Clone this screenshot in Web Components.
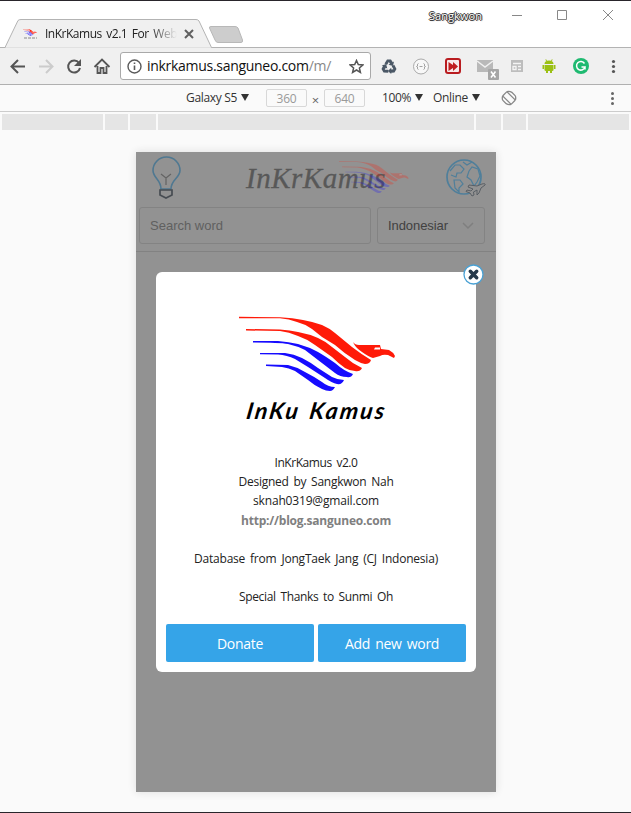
<!DOCTYPE html>
<html lang="en"><head><meta charset="utf-8"><title>InKrKamus</title>
<style>html,body{margin:0;height:813px;overflow:hidden;background:#fafafa}</style></head><body>
<browser-window></browser-window>
<script>
const define=(name,html,init)=>customElements.define(name,class extends HTMLElement{
 constructor(){super();this.attachShadow({mode:'open'}).innerHTML=html;}
 connectedCallback(){if(init)init.call(this);}
});

/* one line of text, tracked so that it fills the given width */
define('fit-text','<style>:host{display:inline-block;white-space:nowrap;flex:none}span{display:inline-block}</style><span><slot></slot></span>',function(){
 const s=this.shadowRoot.querySelector('span'),w=+this.getAttribute('width'),n=this.textContent.length;
 const natural=s.getBoundingClientRect().width;
 if(natural&&w)s.style.letterSpacing=((w-natural)/n)+'px';
});

/* the eagle with striped wings */
define('eagle-logo',`<style>:host{display:block}svg{display:block;width:100%;height:100%}</style>
<svg viewBox="0 0 157 75" preserveAspectRatio="none">
<g fill="#ff1a08">
<path d="M0 .7L41 1.3Q54 2 64 4Q75 6 83 9Q90 12 96 17L113 31Q122 38 132 44Q131 48 126 48Q121 47 116 44Q106 38 96 29L83 21L73 13Q66 8 58 6Q50 3 41 2.300L0 2.300Z"/>
<path d="M7 13L41 13.500Q51 14 59 16Q70 18 79 22Q86 25 93 31L106 41Q114 48 123 52Q121 56 116 55Q111 55 106 52Q100 48 93 41L76 29Q68 23 59 20Q50 16 41 15L7 14.500Z"/>
<path d="M114 26Q116 29 120 29H141L142 33L150 34Q154 36 156 40L155 42L149 39Q144 38 141 40L134 42Q130 41 123 36Q117 32 115 28Z"/></g>
<path fill="#fff" d="M136 31.500H141V33.500H135Z"/>
<g fill="#160bff">
<path d="M14 25L39 25Q50 26 59 28Q70 31 79 36Q86 40 96 47Q105 55 114 58Q112 62 108 61Q101 61 96 57L79 44L66 34Q58 30 49 28Q40 26.500 14 26.500Z"/>
<path d="M21 37L46 37Q55 38 63 42Q71 46 79 52L93 61Q99 64 105 64Q103 69 98 68Q93 67 86 62L69 51L56 43Q48 39 39 38.500L21 38.300Z"/>
<path d="M27 48.500L49 49Q58 51 66 56Q74 60 83 66Q89 71 96 71Q94 75 91 75Q87 75 83 73Q76 70 69 64L56 55Q50 52 43 51L27 50Z"/></g></svg>`);

define('browser-tabs',`<style>:host{display:block;height:48px;background:#fff;position:relative;border-top:1px solid #29252b;box-sizing:border-box;font:12px "Open Sans","Noto Sans CJK KR",sans-serif}
svg{position:absolute;left:0;top:-1px}.tab{display:flex;align-items:center;height:19px;padding:23px 0 0 23px;position:relative}
eagle-logo{width:14px;height:7px;margin-right:8px;margin-top:-2px}.t{-webkit-mask:linear-gradient(90deg,#000 80%,transparent);color:#222;width:132px;overflow:hidden;word-spacing:2px}.u{position:absolute;right:149px;top:6px;font-size:11px;line-height:18px;color:#fff;text-shadow:1px 0 #333,-1px 0 #333,0 1px #333,0 -1px #333,1px 1px 1px #888}</style>
<svg width="631" height="48"><path d="M0 47.500H5L18 20.500Q19 19.500 21 19.500H196Q198 19.500 199 21L211.500 47.500H631V48H0Z" fill="#f0f0f0" stroke="#b3b3b3"/><path d="M6 48H211" stroke="#f0f0f0"/><path d="M211 26.500H235Q237 26.500 238 28L242.500 40Q243 42.500 241 42.500H218Q216 42.500 215 40L209.500 28Q209 26.500 211 26.500Z" fill="#cdcdcd" stroke="#b8b8b8"/>
<path d="M185 30L193 38M193 30L185 38" stroke="#606060" stroke-width="2"/><path d="M24 38H37" stroke="#888" stroke-dasharray="3 1"/>
<path d="M512 15.500H522M557.500 10.500H566.500V19.500H557.500ZM603 10L613 20M613 10L603 20" fill="none" stroke="#888"/></svg>
<div class="tab"><eagle-logo></eagle-logo><div class="t"><fit-text width="132">InKrKamus v2.1 For Web</fit-text></div></div>
<div class="u"><fit-text width="53">Sangkwon</fit-text></div>`);

define('browser-toolbar',`<style>:host{display:grid;grid-template-columns:120px 251px 260px;align-items:center;height:37px;background:#f0f0f0;border-bottom:1px solid #b0b0b0;box-sizing:border-box;font:14px "Open Sans","Noto Sans CJK KR",sans-serif}
svg{display:block}.a{height:28px;box-sizing:border-box;border:1px solid #a9a9a9;border-radius:3px;background:#fff;display:flex;align-items:center;padding:0 6px}.a fit-text{line-height:24px;color:#111;margin-left:5px}.a i{font-style:normal;color:#888}.a .s{margin-left:auto}</style>
<svg width="120" height="36" fill="none" stroke="#555" stroke-width="2"><path d="M25 18.500H12M18 12L11.500 18.500L18 25"/><path d="M39 18.500H52M46 12L52.500 18.500L46 25" stroke="#ccc"/><path d="M79 15A6 6 0 1 0 80 20"/><path d="M81 11V18H74Z" fill="#555" stroke="none"/><path d="M94.500 19L102 11.500L109.500 19M97.500 18V25H100.500V20H103.500V25H106.500V18" stroke-width="1.800"/></svg>
<div class="a"><svg width="15" height="15" fill="none" stroke="#5a5a5a"><circle cx="7.500" cy="7.500" r="6.500" stroke-width="1.400"/><path d="M7.500 6.500V11M7.500 3.500V5" stroke-width="1.600"/></svg><fit-text width="184">inkrkamus.sanguneo.com<i>/m/</i></fit-text><svg class="s" width="15" height="15" fill="none" stroke="#555" stroke-width="1.500"><path d="M7.500 1.500L9.300 5.600L13.800 6L10.400 9L11.400 13.400L7.500 11L3.600 13.400L4.600 9L1.200 6L5.700 5.600Z"/></svg></div>
<svg width="260" height="36">
<g transform="translate(-1 0)"><g transform="translate(19 19)" fill="#4b5866"><path d="M-4.500 -3.500L-2 -7.500H2L3.800 -4.800L5 -5.500L4 -1L-.5 -2.300L1 -3.200L-.2 -5L-2 -2Z"/><path transform="rotate(120)" d="M-4.500 -3.500L-2 -7.500H2L3.800 -4.800L5 -5.500L4 -1L-.5 -2.300L1 -3.200L-.2 -5L-2 -2Z"/><path transform="rotate(240)" d="M-4.500 -3.500L-2 -7.500H2L3.800 -4.800L5 -5.500L4 -1L-.5 -2.300L1 -3.200L-.2 -5L-2 -2Z"/></g>
<circle cx="51" cy="18.500" r="7.500" fill="#f8f8f8" stroke="#aaa"/><path d="M48.500 15.500Q47 15.500 47.500 18L46.500 18.500L47.500 19Q47 21.500 48.500 21.500M53.500 15.500Q55 15.500 54.500 18L55.500 18.500L54.500 19Q55 21.500 53.500 21.500M49.500 18.500H52.500" fill="none" stroke="#999" stroke-width=".9"/>
<rect x="76" y="11" width="14" height="14" rx="2" fill="#f7eaea" stroke="#b91c20" stroke-width="2"/><path d="M78.500 14L83 17V14L88 18.500L83 23V20L78.500 23Z" fill="#c01d20"/>
<path d="M107 12H123V24H107Z" fill="#b9b9b9"/><path d="M107 13L115 19L123 13" fill="none" stroke="#f0f0f0" stroke-width="1.500"/></g><rect x="117" y="21" width="11" height="11" rx="1" fill="#a6a6a6"/><path d="M120 23.500L124.500 29.500M124.500 23.500L120 29.500" stroke="#fff" stroke-width="1.600"/>
<g transform="translate(-1 0)"><rect x="141" y="12" width="12" height="12" fill="#bdbdbd"/><path d="M143 15.500H151M143 18.500H146V21.500H143ZM148 18.500H151M148 21.500H151" stroke="#f4f4f4" stroke-width="1.300" fill="none"/>
<path d="M174.500 16Q174.500 12.500 179 12.500Q183.500 12.500 183.500 16ZM174.500 17H183.500V22Q183.500 23 182 23V25H180V23H178V25H176V23Q174.500 23 174.500 22ZM172.500 17H174V21H172.500ZM184 17H185.500V21H184ZM176 11L177 13H176L175.500 11.500ZM182 11L181 13H182L182.500 11.500Z" fill="#9bc014"/>
<circle cx="211" cy="18" r="8" fill="#1fba71"/><path d="M214.500 15.500A4.300 4.300 0 1 0 215 19H211.500M215 18.500V21.500" fill="none" stroke="#fff" stroke-width="1.500"/>
<g fill="#555"><circle cx="243.500" cy="13.500" r="1.600"/><circle cx="243.500" cy="18.500" r="1.600"/><circle cx="243.500" cy="23.500" r="1.600"/></g></g></svg>`);

define('device-bar',`<style>:host{display:flex;align-items:center;height:27px;border-bottom:1px solid #ccc;box-sizing:border-box;background:#fafafa;padding-left:186px;font:12px "Open Sans","Noto Sans CJK KR",sans-serif;color:#333;line-height:24px}
i{width:0;height:0;border:4px solid transparent;border-top:7px solid #333;border-bottom:0;margin-bottom:1px}.n{box-sizing:border-box;width:41px;height:18px;border:1px solid #d8d8d8;border-radius:2px;text-align:center;color:#999;line-height:17px}.x{width:17px;text-align:center;font-size:13px;color:#666;padding-top:3px}svg{display:block}</style>
<fit-text width="51">Galaxy S5</fit-text><i style="margin-left:4px"></i><div class="n" style="margin-left:17px"><fit-text width="20">360</fit-text></div><span class="x">×</span><div class="n"><fit-text width="20">640</fit-text></div><fit-text width="29" style="margin-left:17px">100%</fit-text><i style="margin-left:4px"></i><fit-text width="35" style="margin-left:10px">Online</fit-text><i style="margin-left:4px"></i>
<svg width="151" height="26" style="flex:none" fill="none" stroke="#888" stroke-width="1.300"><g transform="translate(29 13) rotate(-45)"><rect x="-3" y="-6" width="6" height="12" rx="1"/><path d="M-6 -3A6.500 6.500 0 0 1 -3 -6M6 3A6.500 6.500 0 0 1 3 6M-6 -3V2A6 6 0 0 0 -3 6M6 3V-2A6 6 0 0 0 3 -6"/></g><g fill="#666" stroke="none"><circle cx="132.500" cy="8.500" r="1.500"/><circle cx="132.500" cy="13.500" r="1.500"/><circle cx="132.500" cy="18.500" r="1.500"/></g></svg>`);

define('media-strip',`<style>:host{display:grid;grid-template-columns:101px 23px 26px 316px 25px 23px 101px;gap:2px;padding:2px;height:16px}b{background:#e5e5e5}</style><b></b><b></b><b></b><b></b><b></b><b></b><b></b>`);

define('app-header',`<style>:host{display:block;height:100px;box-sizing:border-box;border-bottom:1px solid #828282}.top{height:55px;display:flex;position:relative}.top>svg{display:block;flex:none}.logo{width:170px;margin-left:63px;position:relative;color:#585858;font:italic 29px "Liberation Serif",serif;-webkit-text-stroke:.3px #585858;line-height:53px}.logo fit-text{position:relative;left:0}.logo eagle-logo{position:absolute;left:93px;top:9px;width:70px;height:32px;opacity:.25}
.fields{display:flex;padding:0 11px 0 3px;gap:6px;font:13px "Liberation Sans",sans-serif}.f{box-sizing:border-box;height:37px;border:1px solid #838383;border-radius:3px;display:flex;align-items:center;padding:0 10px;color:#606060}.s{width:232px}.l{width:108px;color:#414141}.l svg{margin-left:auto}</style>
<div class="top"><svg width="47" height="52" fill="none"><path d="M24 37H35Q35 32 39.500 27Q44 22 44 18.500A13.500 13.500 0 0 0 17 18.500Q17 22 21 27Q25 32 25 37" stroke="#4f7891" stroke-width="1.600"/><path d="M25 22L30 26L35 22M30 26V33" stroke="#636363" stroke-width="1.200"/><path d="M24 38H36V43L30 46L24 43Z" stroke="#474c52" stroke-width="1.700"/></svg>
<div class="logo"><fit-text width="140">InKrKamus</fit-text><eagle-logo></eagle-logo></div>
<svg width="80" height="52" fill="none" stroke="#4f7f9b"><circle cx="48" cy="25" r="17" stroke-width="1.700"/><path d="M34 19L39 13L44 13L48 17L45 21H41L40 25L35 23M47 10L51 13L56 10M38 28H44L47 32L43 36V40L39 36ZM53 19L56 15L62 17L64 24L61 30L58 34L55 28L51 25Z" stroke-width="1.200"/><path d="M66 32L61 34L53 33L52 35L57 37L55 39L51 38L50 39.500L54 41L56 44L58 43L57.500 40L61 38L61 43L63 41L65 36L69 33Q70 31 66 32Z" stroke="#535960" fill="#929292" stroke-width=".9"/></svg></div>
<div class="fields"><div class="f s"><fit-text width="73">Search word</fit-text></div><div class="f l"><fit-text width="60">Indonesiar</fit-text><svg width="12" height="10" fill="none" stroke="#7f7f7f" stroke-width="1.500"><path d="M1 2L6 7L11 2"/></svg></div></div>`);

define('about-dialog',`<style>:host{display:block;position:absolute;left:20px;top:120px;width:320px;height:400px;box-sizing:border-box;background:#fff;border-radius:6px;padding:44px 10px 10px;font:12px "Open Sans","Noto Sans CJK KR",sans-serif;color:#222;word-spacing:2px}
eagle-logo{width:157px;height:75px;margin-left:73px}.script{height:36px;margin-left:81px;font:italic 700 23px/38px Lato,sans-serif;color:#000;word-spacing:2px;transform:skewX(-9deg)}.lines{text-align:center;line-height:19px;height:171px;margin-top:26px}.lines div{height:19px}.lines div:nth-child(n+4){padding-top:1px;margin-bottom:-1px}.lines b{color:#808080}.buttons{display:flex;gap:4px}.buttons div{flex:1;height:38px;background:#35a4e8;border-radius:2px;color:#fff;text-align:center;font-size:14px;line-height:40px}.x{position:absolute;right:-8px;top:-8px}</style>
<eagle-logo></eagle-logo>
<div class="script"><fit-text width="146">InKu Kamus</fit-text></div>
<div class="lines"><div><fit-text width="83">InKrKamus v2.0</fit-text></div><div><fit-text width="155">Designed by Sangkwon Nah</fit-text></div><div><fit-text width="126">sknah0319@gmail.com</fit-text></div><div><b><fit-text width="150">http://blog.sanguneo.com</fit-text></b></div><div></div><div><fit-text width="244">Database from JongTaek Jang (CJ Indonesia)</fit-text></div><div></div><div><fit-text width="154">Special Thanks to Sunmi Oh</fit-text></div></div>
<div class="buttons"><div><fit-text width="46">Donate</fit-text></div><div><fit-text width="94">Add new word</fit-text></div></div>
<svg class="x" width="21" height="21"><circle cx="10.500" cy="10.500" r="9.500" fill="#fff" stroke="#4aa1d4" stroke-width="1.300"/><path d="M7.300 7.300L13.700 13.700M13.700 7.300L7.300 13.700" stroke="#26394a" stroke-width="3.500" stroke-linecap="round"/></svg>`);

define('phone-screen',`<style>:host{display:block;position:relative;width:360px;height:640px;margin:20px auto 0 136px;background:#929292;box-shadow:0 0 8px #ddd}</style><app-header></app-header><about-dialog></about-dialog>`);
define('browser-window',`<style>:host{display:block;height:813px;box-sizing:border-box;border-bottom:1px solid #29252b;background:#fafafa}</style><browser-tabs></browser-tabs><browser-toolbar></browser-toolbar><device-bar></device-bar><media-strip></media-strip><phone-screen></phone-screen>`);
</script></body></html>
